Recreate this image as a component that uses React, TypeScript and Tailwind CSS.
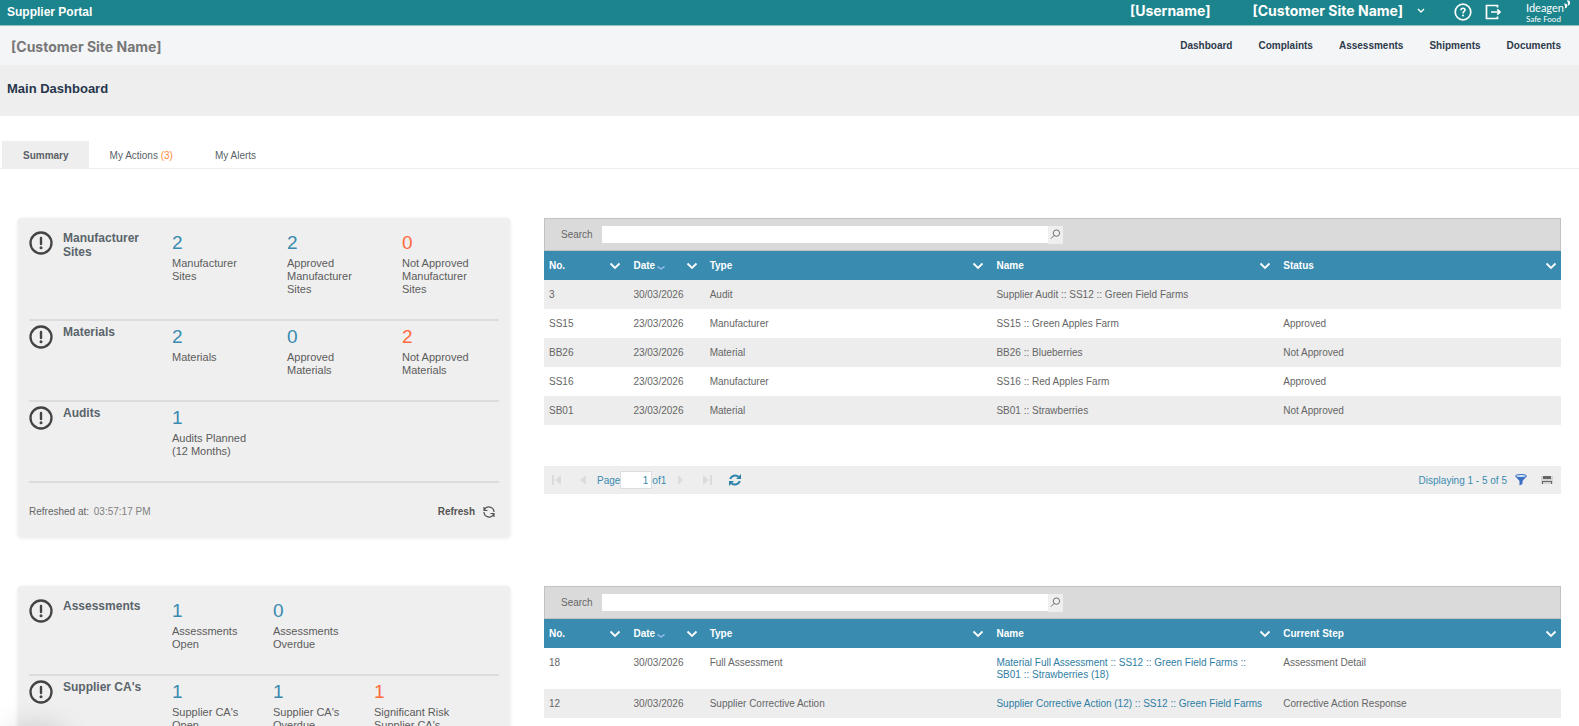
import type { ReactNode } from 'react';

type Stat = { value: number; label: string; alert?: boolean };
type Section = { title: string; stats: Stat[] };
type Row = { no: string; date: string; type: string; name: string; last: string; link?: boolean };

const navLinks = ['Dashboard', 'Complaints', 'Assessments', 'Shipments', 'Documents'];

const siteSections: Section[] = [
  {
    title: 'Manufacturer Sites',
    stats: [
      { value: 2, label: 'Manufacturer Sites' },
      { value: 2, label: 'Approved Manufacturer Sites' },
      { value: 0, label: 'Not Approved Manufacturer Sites', alert: true },
    ],
  },
  {
    title: 'Materials',
    stats: [
      { value: 2, label: 'Materials' },
      { value: 0, label: 'Approved Materials' },
      { value: 2, label: 'Not Approved Materials', alert: true },
    ],
  },
  { title: 'Audits', stats: [{ value: 1, label: 'Audits Planned (12 Months)' }] },
];

const assessmentSections: Section[] = [
  {
    title: 'Assessments',
    stats: [
      { value: 1, label: 'Assessments Open' },
      { value: 0, label: 'Assessments Overdue' },
    ],
  },
  {
    title: "Supplier CA's",
    stats: [
      { value: 1, label: "Supplier CA's Open" },
      { value: 1, label: "Supplier CA's Overdue" },
      { value: 1, label: "Significant Risk Supplier CA's", alert: true },
    ],
  },
];

const approvalRows: Row[] = [
  { no: '3', date: '30/03/2026', type: 'Audit', name: 'Supplier Audit :: SS12 :: Green Field Farms', last: '' },
  { no: 'SS15', date: '23/03/2026', type: 'Manufacturer', name: 'SS15 :: Green Apples Farm', last: 'Approved' },
  { no: 'BB26', date: '23/03/2026', type: 'Material', name: 'BB26 :: Blueberries', last: 'Not Approved' },
  { no: 'SS16', date: '23/03/2026', type: 'Manufacturer', name: 'SS16 :: Red Apples Farm', last: 'Approved' },
  { no: 'SB01', date: '23/03/2026', type: 'Material', name: 'SB01 :: Strawberries', last: 'Not Approved' },
];

const assessmentRows: Row[] = [
  {
    no: '18',
    date: '30/03/2026',
    type: 'Full Assessment',
    name: 'Material Full Assessment :: SS12 :: Green Field Farms :: SB01 :: Strawberries (18)',
    last: 'Assessment Detail',
    link: true,
  },
  {
    no: '12',
    date: '30/03/2026',
    type: 'Supplier Corrective Action',
    name: 'Supplier Corrective Action (12) :: SS12 :: Green Field Farms',
    last: 'Corrective Action Response',
    link: true,
  },
];

function AlertIcon() {
  return (
    <svg viewBox="0 0 24 24" className="size-6 shrink-0" fill="none" stroke="#444" aria-hidden="true">
      <circle cx="12" cy="12" r="10.5" strokeWidth="2.3" />
      <path d="M12 7v6" strokeWidth="2.4" strokeLinecap="round" />
      <circle cx="12" cy="16.8" r="1.5" fill="#444" stroke="none" />
    </svg>
  );
}

function Chevron() {
  return (
    <svg viewBox="0 0 12 8" className="h-2 w-3" fill="none" stroke="currentColor" strokeWidth="1.8" aria-hidden="true">
      <path d="M1.5 1.5 6 6l4.5-4.5" />
    </svg>
  );
}

function Logo() {
  return (
    <a href="#" className="block text-white" aria-label="Ideagen Safe Food">
      <svg viewBox="0 0 48 25" className="h-[25px] w-12" aria-hidden="true">
        <text x="0" y="12" fontFamily="Lato, sans-serif" fontSize="11" fill="#fff">
          Ideagen
        </text>
        <text x="0" y="22" fontFamily="Lato, sans-serif" fontSize="8" fill="#fff">
          Safe Food
        </text>
        <path
          d="M38 3.500q3.200-.200 3.400 2.200 0 2.300-2.600 2.800 1-2.600-.8-5zM41 .300q3-.300 3.200 2.200-.100 2.500-2.500 3.200.8-2.800-.7-5.400z"
          fill="#fff"
        />
      </svg>
    </a>
  );
}

function SummaryCard({ sections, statClass, footer }: { sections: Section[]; statClass: string; footer?: ReactNode }) {
  return (
    <section className="self-start rounded-sm bg-[#efefef] px-[11px] pt-[9px] shadow-[0_1px_4px_rgba(0,0,0,0.1)]">
      {sections.map((section) => (
        <div key={section.title} className="flex border-b-2 border-[#dcdcdc] pt-1 pb-[23px]">
          <AlertIcon />
          <h2 className="ml-[10px] w-[109px] shrink-0 pr-5 text-xs leading-[14px] font-bold text-[#5a646b]">
            {section.title}
          </h2>
          {section.stats.map((stat) => (
            <div key={stat.label} className={statClass}>
              <p className={`text-[19px] leading-6 ${stat.alert ? 'text-[#ff6a3c]' : 'text-[#398bb0]'}`}>
                {stat.value}
              </p>
              <p className="mt-0.5 text-[11px] leading-[13px] text-[#5c5c5c]">{stat.label}</p>
            </div>
          ))}
        </div>
      ))}
      {footer}
    </section>
  );
}

function RefreshFooter() {
  return (
    <div className="flex items-center justify-between pt-[21px] pb-[17px] text-[10px] leading-4 text-[#666]">
      <p>
        Refreshed at: <span className="ml-0.5 text-[#808080]">03:57:17 PM</span>
      </p>
      <button type="button" className="mr-1 flex items-center gap-2 font-bold text-[#555]">
        Refresh
        <svg viewBox="0 0 12 12" className="size-3" fill="none" stroke="currentColor" strokeWidth="1.2" aria-hidden="true">
          <path d="M1 1v3.500h3.500M1.400 4A5 5 0 0 1 11 6M11 11V7.500H7.500M10.600 8A5 5 0 0 1 1 6" />
        </svg>
      </button>
    </div>
  );
}

function SearchBar({ id }: { id: string }) {
  return (
    <div className="flex h-[33px] items-center border border-[#c2c2c2] bg-[#dadada] pl-4 text-[10px]">
      <label htmlFor={id} className="mr-[9px] text-[#666]">
        Search
      </label>
      <input id={id} type="text" className="h-[17px] w-[44.7%] bg-white px-1 outline-none" />
      <button type="button" aria-label="Run search" className="flex h-[18px] w-[15px] items-center justify-center bg-[#efefef]">
        <svg viewBox="0 0 12 12" className="size-[11px]" fill="none" stroke="#666" aria-hidden="true">
          <circle cx="7" cy="4.500" r="3.500" />
          <path d="M4.500 7 1 10.500" />
        </svg>
      </button>
    </div>
  );
}

function DataGrid({ id, lastColumn, rows, stripe }: { id: string; lastColumn: string; rows: Row[]; stripe: string }) {
  const columns = ['No.', 'Date', 'Type', 'Name', lastColumn];
  return (
    <div>
      <SearchBar id={id} />
      <table className="w-full table-fixed text-left text-[10px] leading-3 text-[#666]">
        <colgroup>
          <col className="w-[8.3%]" />
          <col className="w-[7.5%]" />
          <col className="w-[28.2%]" />
          <col className="w-[28.2%]" />
          <col className="w-[27.8%]" />
        </colgroup>
        <thead className="bg-[#398bb0] text-white">
          <tr>
            {columns.map((column) => (
              <th key={column} scope="col" className="h-[29px] p-0 pt-px pr-[7px] pl-[5px] font-bold last:pr-1">
                <div className="flex items-center">
                  {column}
                  {column === 'Date' && (
                    <svg viewBox="0 0 8 4" className="mt-1 ml-0.5 h-1 w-2" fill="none" stroke="#9fc0ee" strokeWidth="1.400" aria-hidden="true">
                      <path d="M.500.500 4 3l3.500-2.500" />
                    </svg>
                  )}
                  <button type="button" aria-label={`${column} menu`} className="ml-auto">
                    <Chevron />
                  </button>
                </div>
              </th>
            ))}
          </tr>
        </thead>
        <tbody>
          {rows.map((row) => (
            <tr key={row.no} className={`align-top ${stripe}`}>
              <td className="px-[5px] pt-[9px] pb-2">{row.no}</td>
              <td className="px-[5px] pt-[9px] pb-2">{row.date}</td>
              <td className="px-[5px] pt-[9px] pb-2">{row.type}</td>
              <td className="pt-[9px] pr-[10px] pb-2 pl-[5px]">
                {row.link ? (
                  <a href="#" className="text-[#2f7ea3]">
                    {row.name}
                  </a>
                ) : (
                  row.name
                )}
              </td>
              <td className="px-[5px] pt-[9px] pb-2">{row.last}</td>
            </tr>
          ))}
        </tbody>
      </table>
    </div>
  );
}

function Pager() {
  return (
    <div className="mt-[41px] flex h-7 items-center bg-[#eee] pr-2 pl-2 text-[10px] text-[#398bb0]">
      <button type="button" aria-label="First page" disabled>
        <svg viewBox="0 0 10 10" className="size-[10px]" fill="#dcdcdc" aria-hidden="true">
          <path d="M0 0h2v10H0zM9 0v10L3 5z" />
        </svg>
      </button>
      <button type="button" aria-label="Previous page" className="ml-[17px]" disabled>
        <svg viewBox="0 0 10 10" className="size-[10px]" fill="#dcdcdc" aria-hidden="true">
          <path d="M7 0v10L1 5z" />
        </svg>
      </button>
      <label htmlFor="page" className="ml-2">
        Page
      </label>
      <input
        id="page"
        type="text"
        defaultValue="1"
        className="h-[18px] w-8 border border-[#ddd] bg-white pr-[3px] text-right outline-none"
      />
      <span>of1</span>
      <button type="button" aria-label="Next page" className="ml-[11px]" disabled>
        <svg viewBox="0 0 10 10" className="size-[10px]" fill="#dcdcdc" aria-hidden="true">
          <path d="M1 0v10l5-5z" />
        </svg>
      </button>
      <button type="button" aria-label="Last page" className="ml-4" disabled>
        <svg viewBox="0 0 10 10" className="size-[10px]" fill="#dcdcdc" aria-hidden="true">
          <path d="M7 0h2v10H7zM0 0v10l6-5z" />
        </svg>
      </button>
      <button type="button" aria-label="Reload" className="ml-4">
        <svg viewBox="0 0 12 12" className="size-3" fill="none" stroke="#2f83aa" strokeWidth="2" aria-hidden="true">
          <path d="M1.200 5A5 4.500 0 0 1 9.500 2.800M10.800 7A5 4.500 0 0 1 2.500 9.200" />
          <path d="M12 0v5H7zM0 12V7h5z" fill="#2f83aa" stroke="none" />
        </svg>
      </button>
      <p className="mr-2 ml-auto">Displaying 1 - 5 of 5</p>
      <button type="button" aria-label="Filter">
        <svg viewBox="0 0 12 12" className="size-3" aria-hidden="true">
          <path d="M0 2 4.500 7v4.500L7.500 10V7L12 2z" fill="#3a6fc4" />
          <ellipse cx="6" cy="2" rx="5.500" ry="1.500" fill="#dce8f8" stroke="#3a6fc4" />
        </svg>
      </button>
      <button type="button" aria-label="Print" className="ml-[14px]">
        <svg viewBox="0 0 12 8" className="h-2 w-3" aria-hidden="true">
          <path d="M0 0h12v8H0z" fill="#d4d4d4" />
          <path d="M2 0h8v3H2zM1 5h10v3h-1V6H2v2H1z" fill="#666" />
        </svg>
      </button>
    </div>
  );
}

export default function App() {
  return (
    <div className="h-screen overflow-hidden bg-white font-['Liberation_Sans',Arial,sans-serif]">
      <header className="flex h-[26px] items-center border-b border-[#8fc0c4] bg-[#1c848c] pr-[5px] pl-[7px] text-white">
        <h1 className="pb-0.5 text-xs font-bold">Supplier Portal</h1>
        <div className="ml-auto flex items-center">
          <span className="mr-[42px] pb-1 font-[Inter,sans-serif] text-sm leading-4 font-bold">[Username]</span>
          <button type="button" className="flex items-center gap-[14px] pb-1 font-[Inter,sans-serif] text-sm leading-4 font-bold">
            [Customer Site Name]
            <svg viewBox="0 0 8 6" className="h-1.5 w-2" fill="none" stroke="currentColor" strokeWidth="1.400" aria-hidden="true">
              <path d="m1 1 3 3 3-3" />
            </svg>
          </button>
          <button type="button" aria-label="Help" className="ml-[29px] pb-0.5">
            <svg viewBox="0 0 18 18" className="size-[18px]" fill="none" stroke="currentColor" aria-hidden="true">
              <circle cx="9" cy="9" r="7.800" strokeWidth="1.700" />
              <path d="M7 7.300Q7 5.300 9 5.300t2 1.800Q11 8 9.700 8.800 9 9.200 9 10.400" strokeWidth="1.600" />
              <circle cx="9" cy="12.500" r="1" fill="currentColor" stroke="none" />
            </svg>
          </button>
          <button type="button" aria-label="Log out" className="ml-[13px] pb-0.5">
            <svg viewBox="0 0 16 16" className="size-4" fill="none" stroke="currentColor" strokeWidth="1.700" aria-hidden="true">
              <path d="M12.500 3.500v-2h-11v13h11v-2M6 8h9M12.300 5.300 15 8l-2.700 2.700" />
            </svg>
          </button>
          <div className="ml-[25px]">
            <Logo />
          </div>
        </div>
      </header>

      <div className="flex h-[39px] items-center justify-between bg-[#f4f5f7] pr-[18px] pl-[11px]">
        <p className="pt-0.5 font-[Inter,sans-serif] text-sm font-bold text-[#777]">[Customer Site Name]</p>
        <nav className="flex gap-[26px] text-[10px] font-bold text-[#2d3a4b]">
          {navLinks.map((link) => (
            <a key={link} href="#">
              {link}
            </a>
          ))}
        </nav>
      </div>

      <div className="flex h-[51px] items-center bg-[#eee] px-[7px] pb-1">
        <h2 className="text-[13px] font-bold text-[#27364b]">Main Dashboard</h2>
      </div>

      <div role="tablist" className="mt-[25px] flex h-7 border-b border-[#eee] pl-0.5 text-[10px] text-[#5a5f66]">
        <button type="button" role="tab" aria-selected="true" className="bg-[#eee] pt-0.5 pr-5 pl-[21px] font-bold">
          Summary
        </button>
        <button type="button" role="tab" aria-selected="false" className="px-[21px] pt-0.5">
          My Actions <span className="text-[#ff8a3c]">(3)</span>
        </button>
        <button type="button" role="tab" aria-selected="false" className="px-[21px] pt-0.5">
          My Alerts
        </button>
      </div>

      <main className="mt-[49px] grid grid-cols-[minmax(0,492fr)_minmax(0,1017fr)] gap-x-[34px] gap-y-[49px] px-[18px]">
        <SummaryCard sections={siteSections} statClass="w-[115px] shrink-0 pr-8" footer={<RefreshFooter />} />
        <div>
          <DataGrid id="search-approvals" lastColumn="Status" rows={approvalRows} stripe="odd:bg-[#ededed]" />
          <Pager />
        </div>
        <SummaryCard sections={assessmentSections} statClass="w-[101px] shrink-0 pr-4" />
        <DataGrid id="search-assessments" lastColumn="Current Step" rows={assessmentRows} stripe="even:bg-[#ededed]" />
      </main>

      {/* shadow of the collapsed help bubble below the fold */}
      <div className="fixed -bottom-10 left-2 h-9 w-14 rounded-full shadow-[0_0_28px_4px_rgba(0,0,0,0.15)]" />
    </div>
  );
}
